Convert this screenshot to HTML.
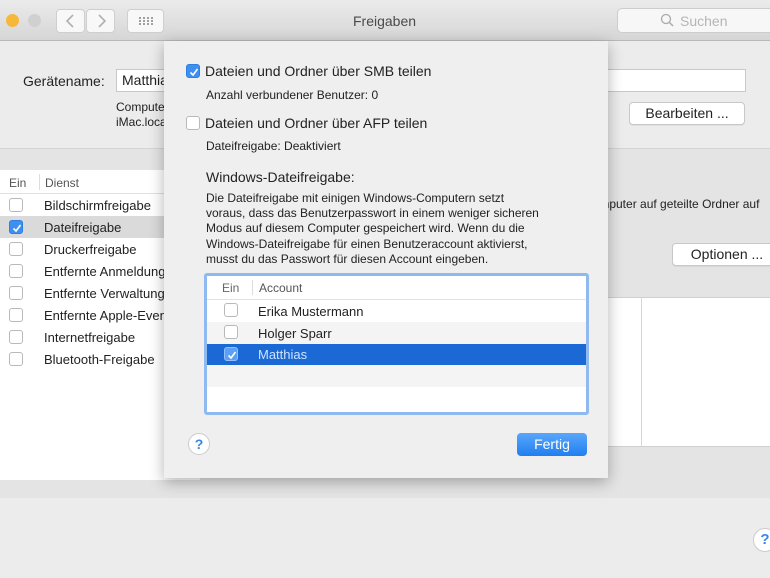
<!DOCTYPE html>
<html><head><meta charset="utf-8"><style>
*{box-sizing:border-box;margin:0;padding:0}
body{width:770px;height:578px;overflow:hidden;background:#ececec;font-family:"Liberation Sans","DejaVu Sans",sans-serif;color:#222;position:relative}
.a{position:absolute}
.cb{position:absolute;width:14px;height:14px;border:1px solid #b9b9b9;border-radius:3px;background:#fff}
.cb.on{background:#3d8ff0;border-color:#2f7fe0}
.cb.on svg{position:absolute;left:1px;top:1px}
.t{position:absolute;font-size:13px;white-space:nowrap}
.btn{position:absolute;background:#fff;border:1px solid #c8c8c8;border-radius:4px;font-size:14px;text-align:center;box-shadow:0 1px 0 rgba(0,0,0,.05)}
</style></head><body>
<div class="a" style="left:0;top:0;width:770px;height:41px;background:linear-gradient(#ebebeb,#d6d6d6);border-bottom:1px solid #b8b8b8"></div>
<div class="a" style="left:6px;top:14px;width:13px;height:13px;border-radius:50%;background:#f6b83a"></div>
<div class="a" style="left:28px;top:14px;width:13px;height:13px;border-radius:50%;background:#d0d0d0"></div>
<div class="a" style="left:56px;top:9px;width:29px;height:24px;background:#f8f8f8;border-radius:4px;border:1px solid #cfcfcf"></div>
<div class="a" style="left:86px;top:9px;width:29px;height:24px;background:#f8f8f8;border-radius:4px;border:1px solid #cfcfcf"></div>
<svg class="a" style="left:56px;top:9px" width="60" height="24"><path d="M17 6 L11 12 L17 18" stroke="#b0b0b0" stroke-width="1.6" fill="none"/><path d="M43 6 L49 12 L43 18" stroke="#b0b0b0" stroke-width="1.6" fill="none"/></svg>
<div class="a" style="left:127px;top:9px;width:37px;height:24px;background:#f8f8f8;border-radius:4px;border:1px solid #cfcfcf"></div>
<svg class="a" style="left:127px;top:9px" width="37" height="24"><g fill="#a0a0a0"><rect x="12" y="8" width="2" height="2"/><rect x="16" y="8" width="2" height="2"/><rect x="20" y="8" width="2" height="2"/><rect x="24" y="8" width="2" height="2"/><rect x="12" y="11" width="2" height="2"/><rect x="16" y="11" width="2" height="2"/><rect x="20" y="11" width="2" height="2"/><rect x="24" y="11" width="2" height="2"/><rect x="12" y="14" width="2" height="2"/><rect x="16" y="14" width="2" height="2"/><rect x="20" y="14" width="2" height="2"/><rect x="24" y="14" width="2" height="2"/></g></svg>
<div class="t" style="left:353px;top:13px;font-size:14px;color:#4a4a4a">Freigaben</div>
<div class="a" style="left:617px;top:8px;width:160px;height:25px;background:#f7f7f7;border:1px solid #cdcdcd;border-radius:5px"></div>
<svg class="a" style="left:660px;top:13px" width="14" height="14"><circle cx="6" cy="6" r="4.5" stroke="#aaa" stroke-width="1.3" fill="none"/><path d="M9.5 9.5 L13 13" stroke="#aaa" stroke-width="1.5"/></svg>
<div class="t" style="left:680px;top:13px;color:#b5b5b5;font-size:14px">Suchen</div>
<div class="t" style="left:23px;top:73px;font-size:14px">Gerätename:</div>
<div class="a" style="left:116px;top:69px;width:630px;height:23px;background:#fff;border:1px solid #c9c9c9"></div>
<div class="t" style="left:122px;top:72px;font-size:14px">Matthias</div>
<div class="t" style="left:116px;top:100px;font-size:12px">Computer</div>
<div class="t" style="left:116px;top:115px;font-size:12px">iMac.local</div>
<div class="btn" style="left:629px;top:102px;width:116px;height:23px;line-height:21px">Bearbeiten ...</div>
<div class="a" style="left:0;top:148px;width:770px;height:1px;background:#d4d4d4"></div>
<div class="a" style="left:0;top:149px;width:770px;height:349px;background:#e4e4e4"></div>
<div class="a" style="left:0;top:170px;width:200px;height:310px;background:#fff"></div>
<div class="a" style="left:0;top:193px;width:200px;height:1px;background:#e0e0e0"></div>
<div class="a" style="left:39px;top:174px;width:1px;height:16px;background:#ddd"></div>
<div class="t" style="left:9px;top:176px;font-size:12px;color:#555">Ein</div>
<div class="t" style="left:45px;top:176px;font-size:12px;color:#555">Dienst</div>
<div class="a" style="left:0;top:216px;width:200px;height:22px;background:#dadada"></div>
<div class="cb" style="left:9px;top:198px"></div><div class="t" style="left:44px;top:198px">Bildschirmfreigabe</div>
<div class="cb on" style="left:9px;top:220px"><svg width="12" height="12"><path d="M2.5 6.5 L5 9 L9.5 3" stroke="#fff" stroke-width="1.6" fill="none"/></svg></div><div class="t" style="left:44px;top:220px">Dateifreigabe</div>
<div class="cb" style="left:9px;top:242px"></div><div class="t" style="left:44px;top:242px">Druckerfreigabe</div>
<div class="cb" style="left:9px;top:264px"></div><div class="t" style="left:44px;top:264px">Entfernte Anmeldung</div>
<div class="cb" style="left:9px;top:286px"></div><div class="t" style="left:44px;top:286px">Entfernte Verwaltung</div>
<div class="cb" style="left:9px;top:308px"></div><div class="t" style="left:44px;top:308px">Entfernte Apple-Events</div>
<div class="cb" style="left:9px;top:330px"></div><div class="t" style="left:44px;top:330px">Internetfreigabe</div>
<div class="cb" style="left:9px;top:352px"></div><div class="t" style="left:44px;top:352px">Bluetooth-Freigabe</div>
<div class="t" style="left:584px;top:197px;font-size:12px">Computer auf geteilte Ordner auf</div>
<div class="btn" style="left:672px;top:243px;width:110px;height:23px;line-height:21px">Optionen ...</div>
<div class="a" style="left:600px;top:297px;width:170px;height:150px;background:#fff;border-top:1px solid #d0d0d0;border-bottom:1px solid #d0d0d0"></div>
<div class="a" style="left:641px;top:297px;width:1px;height:150px;background:#d6d6d6"></div>
<div class="a" style="left:0;top:498px;width:770px;height:80px;background:#ececec"></div>
<div class="a" style="left:753px;top:528px;width:24px;height:24px;border-radius:50%;background:#fff;border:1px solid #ccc;color:#3b86e8;font-weight:bold;font-size:15px;text-align:center;line-height:22px">?</div>
<div class="a" style="left:164px;top:41px;width:444px;height:437px;background:#efefef;box-shadow:0 4px 14px rgba(0,0,0,.3)"></div>
<div class="cb on" style="left:186px;top:64px"><svg width="12" height="12"><path d="M2.5 6.5 L5 9 L9.5 3" stroke="#fff" stroke-width="1.6" fill="none"/></svg></div>
<div class="t" style="left:205px;top:63px;font-size:14px">Dateien und Ordner über SMB teilen</div>
<div class="t" style="left:206px;top:88px;font-size:12px">Anzahl verbundener Benutzer: 0</div>
<div class="cb" style="left:186px;top:116px"></div>
<div class="t" style="left:205px;top:115px;font-size:14px">Dateien und Ordner über AFP teilen</div>
<div class="t" style="left:206px;top:139px;font-size:12px">Dateifreigabe: Deaktiviert</div>
<div class="t" style="left:206px;top:169px;font-size:14px">Windows-Dateifreigabe:</div>
<div class="a" style="left:206px;top:191px;font-size:12px;line-height:15.2px;width:390px;white-space:nowrap">Die Dateifreigabe mit einigen Windows-Computern setzt<br>voraus, dass das Benutzerpasswort in einem weniger sicheren<br>Modus auf diesem Computer gespeichert wird. Wenn du die<br>Windows-Dateifreigabe für einen Benutzeraccount aktivierst,<br>musst du das Passwort für diesen Account eingeben.</div>
<div class="a" style="left:204px;top:273px;width:385px;height:142px;border:3px solid #8fbaf0;border-radius:3px;background:#fff;overflow:hidden">
 <div class="a" style="left:0;top:23px;width:380px;height:1px;background:#e2e2e2"></div>
 <div class="a" style="left:45px;top:4px;width:1px;height:15px;background:#ddd"></div>
 <div class="t" style="left:15px;top:5px;font-size:12px;color:#666">Ein</div>
 <div class="t" style="left:52px;top:5px;font-size:12px;color:#555">Account</div>
 <div class="a" style="left:0;top:46px;width:380px;height:22px;background:#f4f4f4"></div>
 <div class="a" style="left:0;top:68px;width:380px;height:21px;background:#1a69d4"></div>
 <div class="a" style="left:0;top:89px;width:380px;height:22px;background:#f4f4f4"></div>
 <div class="cb" style="left:17px;top:27px"></div><div class="t" style="left:51px;top:28px">Erika Mustermann</div>
 <div class="cb" style="left:17px;top:49px"></div><div class="t" style="left:51px;top:50px">Holger Sparr</div>
 <div class="cb on" style="left:17px;top:71px;background:#5aa0f5;border-color:#8fc0ff"><svg width="12" height="12"><path d="M2.5 6.5 L5 9 L9.5 3" stroke="#fff" stroke-width="1.6" fill="none"/></svg></div><div class="t" style="left:51px;top:71px;color:#cfe2ff">Matthias</div>
</div>
<div class="a" style="left:188px;top:433px;width:22px;height:22px;border-radius:50%;background:#fff;border:1px solid #ccc;color:#3b86e8;font-weight:bold;font-size:14px;text-align:center;line-height:20px">?</div>
<div class="a" style="left:517px;top:433px;width:70px;height:23px;border-radius:4px;background:linear-gradient(#5aa6fb,#1f7ff0);color:#fff;font-size:14px;text-align:center;line-height:23px">Fertig</div>
</body></html>
